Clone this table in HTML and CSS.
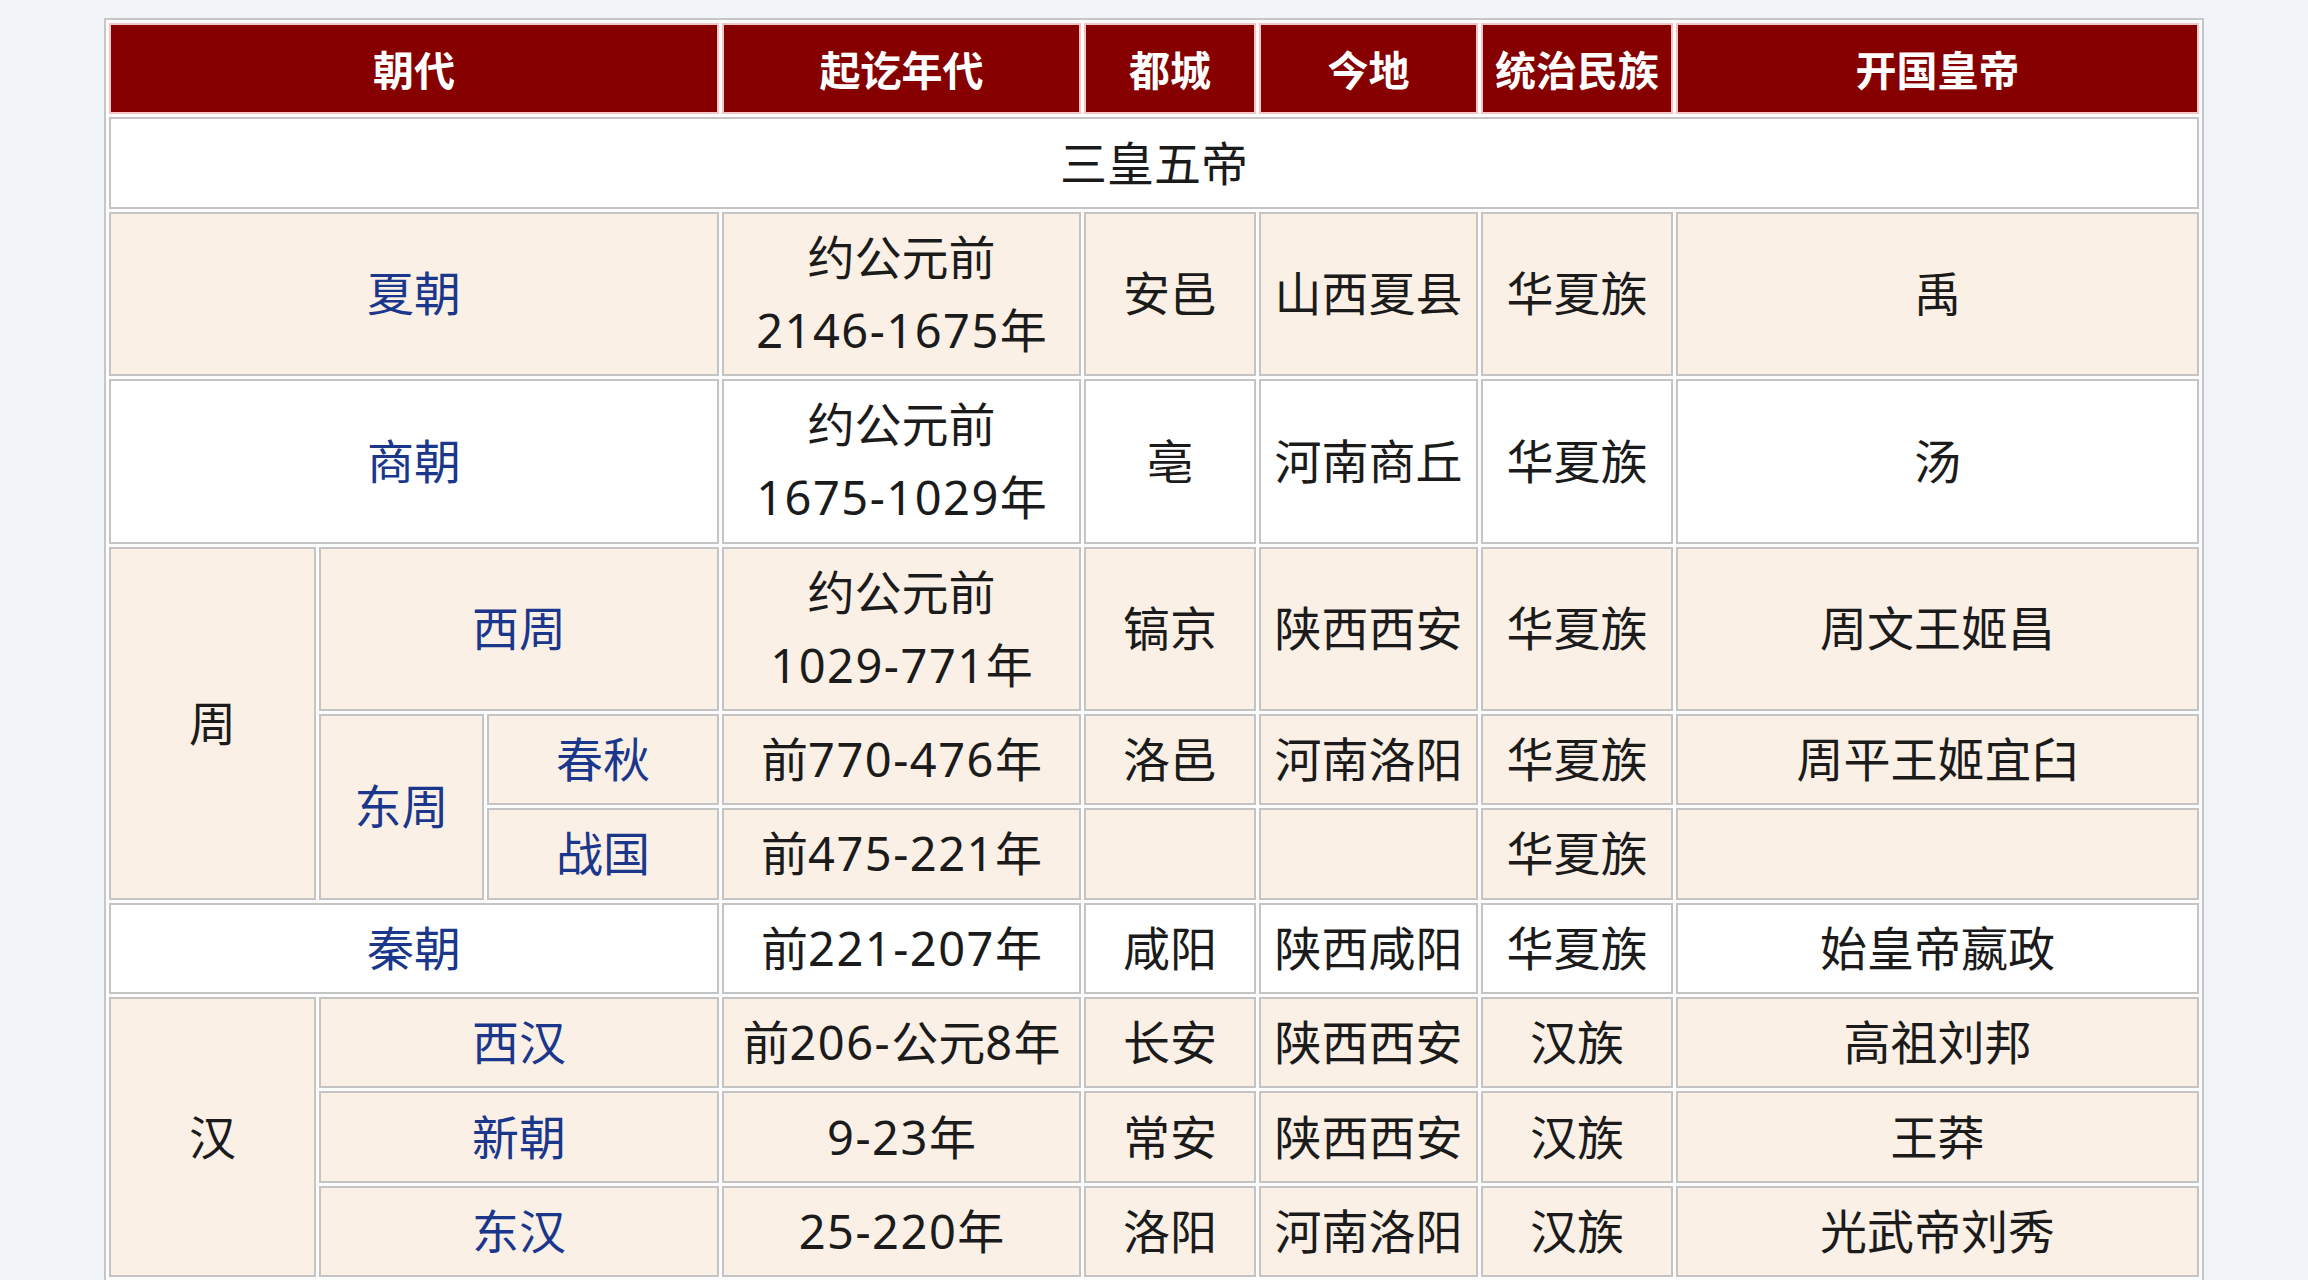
FILE: index.html
```html
<!DOCTYPE html>
<html lang="zh-CN">
<head>
<meta charset="utf-8">
<title>中国朝代表</title>
<link rel="stylesheet" href="styles.css">
</head>
<body>
<main class="page">
  <table class="dynasty-table">
    <colgroup>
      <col class="c-a"><col class="c-b"><col class="c-c"><col class="c-d">
      <col class="c-e"><col class="c-f"><col class="c-g"><col class="c-h">
    </colgroup>
    <thead>
      <tr>
        <th colspan="3">朝代</th>
        <th>起讫年代</th>
        <th>都城</th>
        <th>今地</th>
        <th>统治民族</th>
        <th>开国皇帝</th>
      </tr>
    </thead>
    <tbody>
      <tr class="row-white">
        <td colspan="8">三皇五帝</td>
      </tr>
      <tr class="row-beige">
        <td colspan="3"><a href="#">夏朝</a></td>
        <td>约公元前<br><span class="num">2146-1675</span>年</td>
        <td>安邑</td>
        <td>山西夏县</td>
        <td>华夏族</td>
        <td>禹</td>
      </tr>
      <tr class="row-white">
        <td colspan="3"><a href="#">商朝</a></td>
        <td>约公元前<br><span class="num">1675-1029</span>年</td>
        <td>亳</td>
        <td>河南商丘</td>
        <td>华夏族</td>
        <td>汤</td>
      </tr>
      <tr class="row-beige">
        <td rowspan="3">周</td>
        <td colspan="2"><a href="#">西周</a></td>
        <td>约公元前<br><span class="num">1029-771</span>年</td>
        <td>镐京</td>
        <td>陕西西安</td>
        <td>华夏族</td>
        <td>周文王姬昌</td>
      </tr>
      <tr class="row-beige">
        <td rowspan="2"><a href="#">东周</a></td>
        <td><a href="#">春秋</a></td>
        <td>前<span class="num">770-476</span>年</td>
        <td>洛邑</td>
        <td>河南洛阳</td>
        <td>华夏族</td>
        <td>周平王姬宜臼</td>
      </tr>
      <tr class="row-beige">
        <td><a href="#">战国</a></td>
        <td>前<span class="num">475-221</span>年</td>
        <td></td>
        <td></td>
        <td>华夏族</td>
        <td></td>
      </tr>
      <tr class="row-white">
        <td colspan="3"><a href="#">秦朝</a></td>
        <td>前<span class="num">221-207</span>年</td>
        <td>咸阳</td>
        <td>陕西咸阳</td>
        <td>华夏族</td>
        <td>始皇帝嬴政</td>
      </tr>
      <tr class="row-beige">
        <td rowspan="3">汉</td>
        <td colspan="2"><a href="#">西汉</a></td>
        <td>前<span class="num">206-</span>公元<span class="num">8</span>年</td>
        <td>长安</td>
        <td>陕西西安</td>
        <td>汉族</td>
        <td>高祖刘邦</td>
      </tr>
      <tr class="row-beige">
        <td colspan="2"><a href="#">新朝</a></td>
        <td><span class="num">9-23</span>年</td>
        <td>常安</td>
        <td>陕西西安</td>
        <td>汉族</td>
        <td>王莽</td>
      </tr>
      <tr class="row-beige">
        <td colspan="2"><a href="#">东汉</a></td>
        <td><span class="num">25-220</span>年</td>
        <td>洛阳</td>
        <td>河南洛阳</td>
        <td>汉族</td>
        <td>光武帝刘秀</td>
      </tr>
      <tr class="row-white">
        <td>三国</td>
        <td colspan="2"><a href="#">曹魏</a></td>
        <td><span class="num">220-265</span>年</td>
        <td>洛阳</td>
        <td>河南洛阳</td>
        <td>汉族</td>
        <td>魏文帝曹丕</td>
      </tr>
    </tbody>
  </table>
</main>
</body>
</html>
```

FILE: styles.css
```css
html, body {
  margin: 0;
  padding: 0;
}

body {
  background: #f1f4f9;
  font-family: "Noto Sans", "Noto Sans CJK SC", sans-serif;
  overflow: hidden;
}

.page {
  padding-top: 18px;
}

.dynasty-table {
  margin: 0 auto;
  width: 2100px;
  table-layout: fixed;
  border: 2px solid #c6c6c6;
  border-spacing: 3px;
  background: #fcfcfc;
}

.c-a { width: 207px; }
.c-b { width: 165px; }
.c-c { width: 232px; }
.c-d { width: 359px; }
.c-e { width: 172px; }
.c-f { width: 219px; }
.c-g { width: 192px; }
.c-h { width: 523px; }

.dynasty-table th,
.dynasty-table td {
  padding: 7.2px 2px;
  line-height: 73px;
  text-align: center;
  vertical-align: middle;
  white-space: nowrap;
}

.dynasty-table th {
  background: #860000;
  border: 2px solid #f2c6c6;
  color: #ffffff;
  font-family: "Noto Sans CJK SC", sans-serif;
  font-size: 41px;
  font-weight: 700;
}

.dynasty-table td {
  border: 2px solid #c4c4c4;
  color: #1b1b1b;
  font-size: 47px;
}

.num {
  letter-spacing: 1.5px;
}

.row-white td {
  background: #ffffff;
}

.row-beige td {
  background: #faf0e6;
}

.dynasty-table a {
  color: #1a378c;
  text-decoration: none;
}
```
